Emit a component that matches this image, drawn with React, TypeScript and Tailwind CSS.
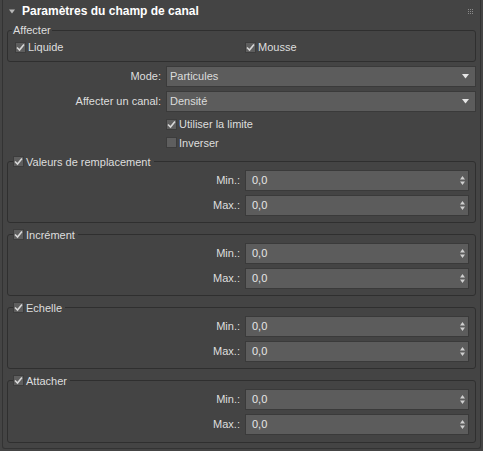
import React from "react";

function Check({ checked = true }: { checked?: boolean }) {
  return (
    <span className="w-[11px] h-[11px] bg-[#5e5e5e] border border-[#3c3c3c] flex items-center justify-center shrink-0">
      {checked && (
        <svg width="9" height="9" viewBox="0 0 9 9">
          <path d="M1 4.5 L3.5 7 L8 1.5" stroke="#d8d8d8" strokeWidth="1.6" fill="none" />
        </svg>
      )}
    </span>
  );
}

function CheckLabel({ label, checked = true }: { label: string; checked?: boolean }) {
  return (
    <span className="flex items-center gap-[2px]">
      <Check checked={checked} />
      <span className="leading-[14px]">{label}</span>
    </span>
  );
}

function Dropdown({ value }: { value: string }) {
  return (
    <div className="h-[21px] bg-[#5c5c5c] border border-[#3a3a3a] flex items-center pl-[3px] pr-[6px] text-[#dcdcdc]">
      <span className="flex-1">{value}</span>
      <svg width="7" height="5" viewBox="0 0 7 5">
        <path d="M0 0 H7 L3.5 4.5 Z" fill="#e6e6e6" />
      </svg>
    </div>
  );
}

function Spinner({ value }: { value: string }) {
  return (
    <div className="h-[21px] bg-[#5c5c5c] border border-[#3a3a3a] flex items-center pl-[6px] pr-[3px] text-[#e6e6e6]">
      <span className="flex-1">{value}</span>
      <svg width="5" height="9" viewBox="0 0 5 9">
        <path d="M2.5 0 L5 3.5 H0 Z" fill="#cfcfcf" />
        <path d="M0 5.5 H5 L2.5 9 Z" fill="#cfcfcf" />
      </svg>
    </div>
  );
}

function Group({ title, last = false }: { title: string; last?: boolean }) {
  return (
    <fieldset
      className={
        last
          ? "border border-[#2f2f2f] rounded-[3px] mt-[4px] pb-[7px] pr-[6px]"
          : "border border-[#2f2f2f] rounded-[3px] mt-[4px] pb-[6px] pr-[6px]"
      }
    >
      <legend className="h-[15px] ml-[5px] pr-[3px] flex items-center">
        <CheckLabel label={title} />
      </legend>
      <div className="grid grid-cols-[232px_1fr] gap-x-[5px] gap-y-[4px] pt-[1px] items-center">
        <span className="text-right">Min.:</span>
        <Spinner value="0,0" />
        <span className="text-right">Max.:</span>
        <Spinner value="0,0" />
      </div>
    </fieldset>
  );
}

export default function App() {
  return (
    <div className="w-[483px] h-[451px] bg-[#444444] font-['Liberation_Sans',sans-serif] text-[11px] text-[#dedede] pt-[0px] px-[2px] pb-[2px]">
      <div className="h-[449px] border-x border-b border-[#333333] rounded-b-[3px] flex flex-col">
        <div className="h-[22px] flex items-center pl-[6px] pr-[7px] gap-[7px]">
          <svg width="6" height="5" viewBox="0 0 6 5">
            <path d="M0 0.5 H6 L3 4.5 Z" fill="#b8b8b8" />
          </svg>
          <span className="flex-1 font-bold text-[12px] text-white">Paramètres du champ de canal</span>
          <svg width="5" height="5" viewBox="0 0 5 5">
            {[0, 2, 4].map((x) =>
              [0, 2, 4].map((y) => <rect key={`${x}-${y}`} x={x} y={y} width="1" height="1" fill="#8a8a8a" />)
            )}
          </svg>
        </div>
        <div className="px-[4px] flex flex-col">
          <fieldset className="border border-[#2f2f2f] rounded-[3px] mt-[1px] pt-[3px] pb-[7px]">
            <legend className="h-[14px] ml-[4px] px-[1px] flex items-center leading-[14px]">Affecter</legend>
            <div className="flex pl-[7px]">
              <div className="w-[230px]">
                <CheckLabel label="Liquide" />
              </div>
              <CheckLabel label="Mousse" />
            </div>
          </fieldset>
          <div className="grid grid-cols-[154px_1fr] gap-x-[5px] gap-y-[4px] items-center mt-[4px]">
            <span className="text-right">Mode:</span>
            <Dropdown value="Particules" />
            <span className="text-right">Affecter un canal:</span>
            <Dropdown value="Densité" />
            <span />
            <div className="h-[20px] flex items-center mt-[-2px]">
              <CheckLabel label="Utiliser la limite" />
            </div>
            <span />
            <div className="h-[15px] flex items-center mt-[-3px]">
              <CheckLabel label="Inverser" checked={false} />
            </div>
          </div>
          <Group title="Valeurs de remplacement" />
          <Group title="Incrément" />
          <Group title="Echelle" />
          <Group title="Attacher" last />
        </div>
      </div>
    </div>
  );
}
